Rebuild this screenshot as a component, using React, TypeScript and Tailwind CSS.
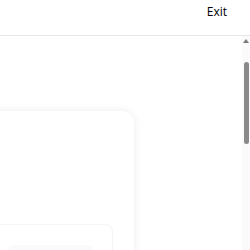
import React from 'react';

const App: React.FC = () => {
  return (
    <div className="h-[250px] w-[250px] overflow-hidden bg-white flex flex-col" style={{ fontFamily: '"Open Sans", "Liberation Sans", sans-serif' }}>
      {/* Top bar */}
      <header className="h-9 shrink-0 border-b border-gray-200 flex items-center justify-end pr-[23px]">
        <button className="text-[12px] text-black -mt-3">Exit</button>
      </header>

      {/* Scrolling body */}
      <main className="flex-1 flex min-h-0">
        <div className="flex-1 overflow-hidden">
          <div className="pt-[75px] pb-40">
            <div className="w-[300px] -ml-[166px] h-[400px] bg-white rounded-xl shadow-[0_0_8px_rgba(0,0,0,0.08)] pt-[113px] pr-[21px]">
              <div className="rounded-lg border border-gray-100 h-[200px] pt-5 pl-[173px]">
                <div className="w-[85px] h-8 rounded-md bg-gray-50" />
              </div>
            </div>
          </div>
        </div>

        {/* Scrollbar */}
        <div className="w-2 shrink-0 bg-[#fafafa] flex flex-col items-center pt-[3px]">
          <div className="w-0 h-0 border-l-[3px] border-r-[3px] border-b-[4px] border-l-transparent border-r-transparent border-b-[#7a7a7a]" />
          <div className="mt-[19px] w-[5px] h-[82px] rounded-full bg-[#8a8a8a]" />
        </div>
      </main>
    </div>
  );
};

export default App;
